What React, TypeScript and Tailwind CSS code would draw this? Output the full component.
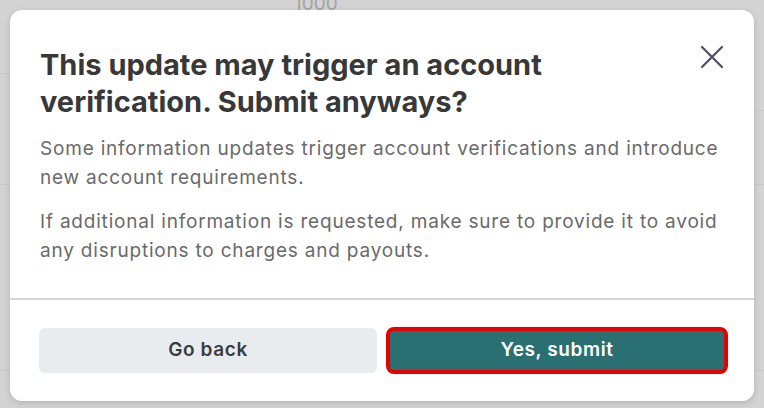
export default function App() {
  return (
    <div
      className="relative h-[408px] w-[764px] overflow-hidden bg-[#d3d3d3]"
      style={{ fontFamily: "Inter, 'Noto Sans', sans-serif" }}
    >
      {/* faint page behind the overlay */}
      <div className="absolute left-[294px] top-[-10px] text-[19px] text-[#a3a3a3]">1000</div>
      <div className="absolute left-0 top-[73px] h-px w-[20px] bg-[#c8c8c8]" />
      <div className="absolute right-0 top-[110px] h-px w-[20px] bg-[#c8c8c8]" />
      <div className="absolute left-0 right-0 top-[184px] h-px bg-[#c8c8c8]" />
      <div className="absolute left-0 right-0 top-[370px] h-px bg-[#c8c8c8]" />

      <div className="relative ml-[10px] mt-[10px] flex h-[391px] w-[744px] flex-col rounded-[12px] bg-white shadow-[0_2px_6px_rgba(0,0,0,0.15)]">
        <div className="flex items-start justify-between pl-[30px] pr-[29px] pt-[36px]">
          <h2 className="w-[580px] text-[29px] font-bold leading-[37px] text-[#383838]">
            This update may trigger an account verification. Submit anyways?
          </h2>
          <button className="-mt-[2px] text-[#4b5064]">
            <svg width="26" height="26" viewBox="0 0 26 26" fill="none" stroke="currentColor" strokeWidth="2.2" strokeLinecap="round">
              <path d="M3 3L23 23M23 3L3 23" />
            </svg>
          </button>
        </div>
        <div className="space-y-[16px] pl-[30px] pr-[24px] pt-[15px] text-[19px] leading-[28.5px] tracking-[0.8px] text-[#6a6a6a]">
          <p>Some information updates trigger account verifications and introduce new account requirements.</p>
          <p>If additional information is requested, make sure to provide it to avoid any disruptions to charges and payouts.</p>
        </div>
        <div className="mt-auto border-t-2 border-[#d6d6d6] pb-[27px] pl-[29px] pr-[26px] pt-[28px]">
          <div className="flex gap-[9px]">
            <button className="h-[45px] flex-1 rounded-[6px] bg-[#e9ecef] text-[19px] font-semibold tracking-[0.6px] text-[#3a3d40]">
              Go back
            </button>
            <button className="-mt-px h-[47px] w-[342px] rounded-[8px] border-4 border-[#e60000] bg-[#2a7073] text-[19px] font-semibold tracking-[0.6px] text-white">
              Yes, submit
            </button>
          </div>
        </div>
      </div>
    </div>
  );
}
